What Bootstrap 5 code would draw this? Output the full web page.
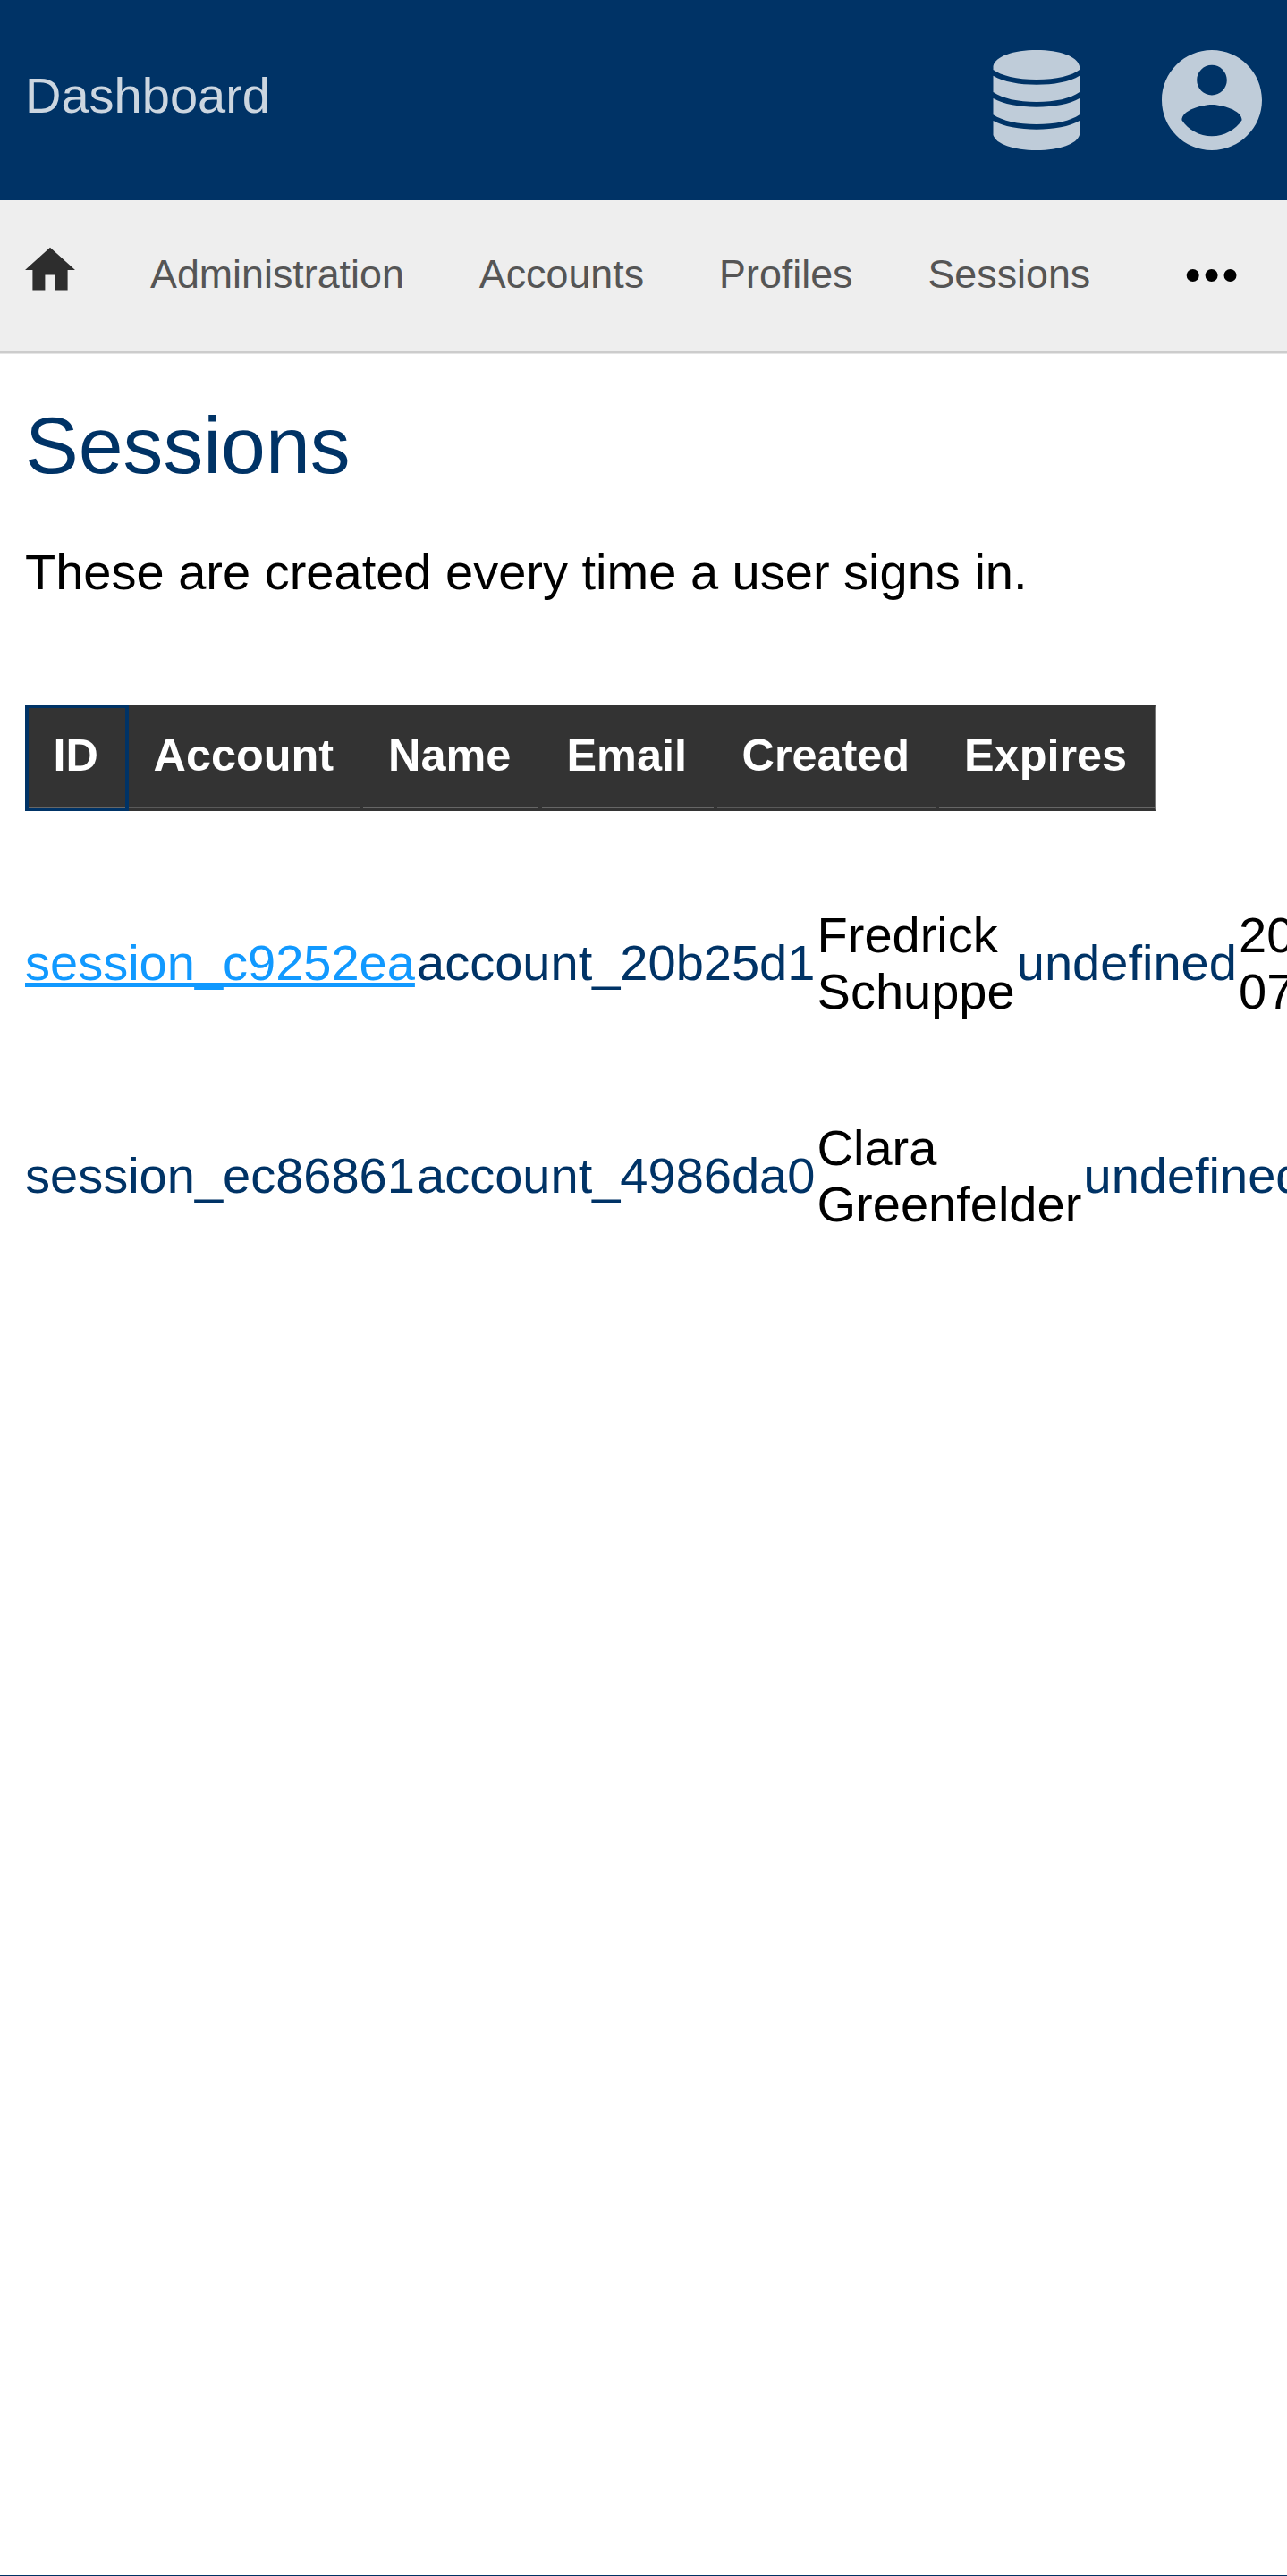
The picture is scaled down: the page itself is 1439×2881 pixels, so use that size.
<!DOCTYPE html>
<html lang="en">
<head>
<meta charset="utf-8">
<title>Sessions</title>
<link href="https://cdn.jsdelivr.net/npm/bootstrap@5.3.0/dist/css/bootstrap.min.css" rel="stylesheet">
<style>
body{font-family:"Liberation Sans",Arial,sans-serif;font-size:56px;line-height:63px;color:#000;background:#fff;height:2881px;overflow:hidden;border-bottom:1px solid #036}
.topbar{height:224px;background:#036;padding:0 28px;color:#ccd6e0}
.topbar .title{margin-top:-12px}
.topicons{gap:91px;color:#bfccd9}
.subnav{height:168px;background:#eee;padding:0 28px;font-size:44.8px;line-height:52px;color:#555}
.subrule{height:4px;background:#ccc;border-bottom:1px solid #e5e5e5}
.links{gap:84px;margin:-5px 0 0 84px}
.pagebody{padding:0 28px}
h1{font-size:89.6px;line-height:101px;color:#036;margin:52px 0 0;font-weight:400}
.intro{margin:59px 0 0}
.heads{margin-top:117px;height:119px;color:#fff;font-size:50.4px;line-height:56px;font-weight:700}
.heads div{flex:none;background:#333;border:solid #333;border-width:4px 0 3px 3px;padding:24.5px 0 0 28px;box-shadow:inset 0 -1px #666}
.heads .h-id{width:116px;border-color:#036;border-width:4px 4px 3px 4px;padding-left:27.5px}
.heads .h-account{width:259px;border-left-width:0;padding-left:27.5px}
.heads .h-name{width:199px}
.heads .h-email{width:196px;border-left-width:4px;padding-left:27.5px}
.heads .h-created{width:249px;border-left-width:4px;padding-left:27.5px}
.heads .h-expires{width:245px;border-right:1px solid #777}
.heads .h-account,.heads .h-created{box-shadow:inset -1px -1px #5a5a5a}
.rows{padding-top:107px}
.rows a{color:#036;text-decoration:none;padding-bottom:2px}
.rows a.hot{color:#19f;text-decoration:underline}
.entry{height:126px;gap:2.2px;margin-bottom:112px;white-space:nowrap}
</style>
<script src="https://cdn.jsdelivr.net/npm/bootstrap@5.3.0/dist/js/bootstrap.bundle.min.js"></script>
</head>
<body>
<header class="topbar d-flex align-items-center justify-content-between">
<span class="title">Dashboard</span>
<div class="topicons d-flex">
<svg width="98" height="112" viewBox="0 0 98 112" fill="currentColor"><path d="M.5 18C3 7 23 0 49 0s45.500 7 48 18v4C89 28.500 71 33 49 33S9 28.500.5 22zM.5 28.700C12 35.500 30 38.700 49 38.700s37-3.200 48-10V47C87 54 70 58 49 58S11 54 .5 47zM.5 54C12 60.500 30 63.700 49 63.700S86 60.500 97 54v18.200C87 79 70 83 49 83S11 79 .5 72.200zM.5 79C12 85.500 30 88.700 49 88.700S86 85.500 97 79v16c-3 10-22 17-48 17S3.500 105 .5 95z"/></svg>
<svg width="112" height="112" viewBox="2 2 20 20" fill="currentColor"><path d="M12 2C6.480 2 2 6.480 2 12s4.480 10 10 10 10-4.480 10-10S17.520 2 12 2zm0 3c1.660 0 3 1.340 3 3s-1.340 3-3 3-3-1.340-3-3 1.340-3 3-3zm0 14.200c-2.500 0-4.710-1.280-6-3.220.03-1.990 4-3.080 6-3.080 1.990 0 5.970 1.090 6 3.080-1.290 1.940-3.500 3.220-6 3.220z"/></svg>
</div>
</header>
<nav class="subnav d-flex align-items-center">
<svg width="56" height="67.200" viewBox="2 2 20 24" fill="#2d2d2d"><path d="M10 20v-6h4v6h5v-8h3L12 3 2 12h3v8z"/></svg>
<div class="links d-flex"><span>Administration</span><span>Accounts</span><span>Profiles</span><span>Sessions</span></div>
<svg class="ms-auto me-4" width="64" height="14" viewBox="0 0 64 14"><circle cx="10.700" cy="7" r="7"/><circle cx="31.600" cy="7" r="7"/><circle cx="52.500" cy="7" r="7"/></svg>
</nav>
<div class="subrule"></div>
<main class="pagebody">
<h1>Sessions</h1>
<p class="intro">These are created every time a user signs in.</p>
<div class="heads d-flex"><div class="h-id">ID</div><div class="h-account">Account</div><div class="h-name">Name</div><div class="h-email">Email</div><div class="h-created">Created</div><div class="h-expires">Expires</div></div>
<div class="rows">
<div class="entry d-flex align-items-center"><a href="#" class="hot">session_c9252ea</a><a href="#">account_20b25d1</a><span>Fredrick<br>Schuppe</span><a href="#">undefined</a><span>20<br>07</span></div>
<div class="entry d-flex align-items-center"><a href="#">session_ec86861</a><a href="#">account_4986da0</a><span>Clara<br>Greenfelder</span><a href="#">undefined</a></div>
</div>
</main>
</body>
</html>
